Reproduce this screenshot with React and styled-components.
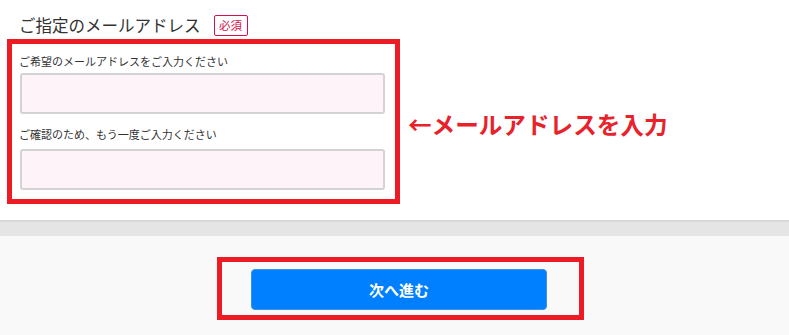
import React from "react";
import styled, { createGlobalStyle } from "styled-components";

const GlobalStyle = createGlobalStyle`
  body {
    margin: 0;
    background: #f9f9f9;
    font-family: "Noto Sans CJK JP", "Noto Sans", sans-serif;
  }
`;

const Section = styled.section`
  background: #ffffff;
  height: 220px;
  box-sizing: border-box;
  padding: 13px 0 0 7px;
`;

const Header = styled.div`
  display: flex;
  align-items: center;
  height: 24px;
  padding-left: 12px;
`;

const Title = styled.h2`
  margin: 0;
  font-size: 16.5px;
  font-weight: 400;
  color: #333333;
  line-height: 24px;
`;

const Badge = styled.span`
  margin-left: 13px;
  width: 34px;
  height: 21px;
  box-sizing: border-box;
  border: 1px solid #d6104c;
  border-radius: 2px;
  color: #d6104c;
  font-size: 11.5px;
  display: flex;
  align-items: center;
  justify-content: center;
`;

const Row = styled.div`
  display: flex;
  align-items: flex-start;
  margin-top: 2px;
`;

const Highlight = styled.div`
  width: ${(p) => p.$width}px;
  box-sizing: border-box;
  border: 5px solid #ed1c24;
  padding: ${(p) => p.$pad};
  display: flex;
  flex-direction: column;
`;

const Label = styled.label`
  font-size: 11px;
  line-height: 16px;
  color: #333333;
  margin-left: -1px;
`;

const Input = styled.input`
  width: 365px;
  height: 41px;
  box-sizing: border-box;
  margin-top: ${(p) => p.$top}px;
  margin-bottom: ${(p) => p.$bottom}px;
  border: 2px solid #d3d3d3;
  border-radius: 3px;
  background: #fdf3f8;
  outline: none;
`;

const Note = styled.div`
  margin: 71px 0 0 8px;
  color: #e8212b;
  font-size: 23.6px;
  font-weight: 700;
  line-height: 28px;
`;

const Band = styled.div`
  height: 16px;
  background: #e5e5e5;
  border-top: 2px solid #d8d8d8;
  box-sizing: border-box;
`;

const Footer = styled.footer`
  display: flex;
  justify-content: center;
  padding: 21px 0 0 12px;
`;

const Button = styled.button`
  width: 296px;
  height: 41px;
  background: #0080ff;
  border: 1px solid #3a8fe8;
  border-radius: 4px;
  color: #ffffff;
  font-family: "Noto Sans CJK JP", sans-serif;
  font-size: 15px;
  font-weight: 700;
`;

export default function App() {
  return (
    <>
      <GlobalStyle />
      <Section>
        <Header>
          <Title>ご指定のメールアドレス</Title>
          <Badge>必須</Badge>
        </Header>
        <Row>
          <Highlight $width={393} $pad="9px 0 9px 8px">
            <Label>ご希望のメールアドレスをご入力ください</Label>
            <Input $top={4} $bottom={12} />
            <Label>ご確認のため、もう一度ご入力ください</Label>
            <Input $top={7} $bottom={0} />
          </Highlight>
          <Note>←メールアドレスを入力</Note>
        </Row>
      </Section>
      <Band />
      <Footer>
        <Highlight $width={367} $pad="7px 32px 5px 29px">
          <Button>次へ進む</Button>
        </Highlight>
      </Footer>
    </>
  );
}
